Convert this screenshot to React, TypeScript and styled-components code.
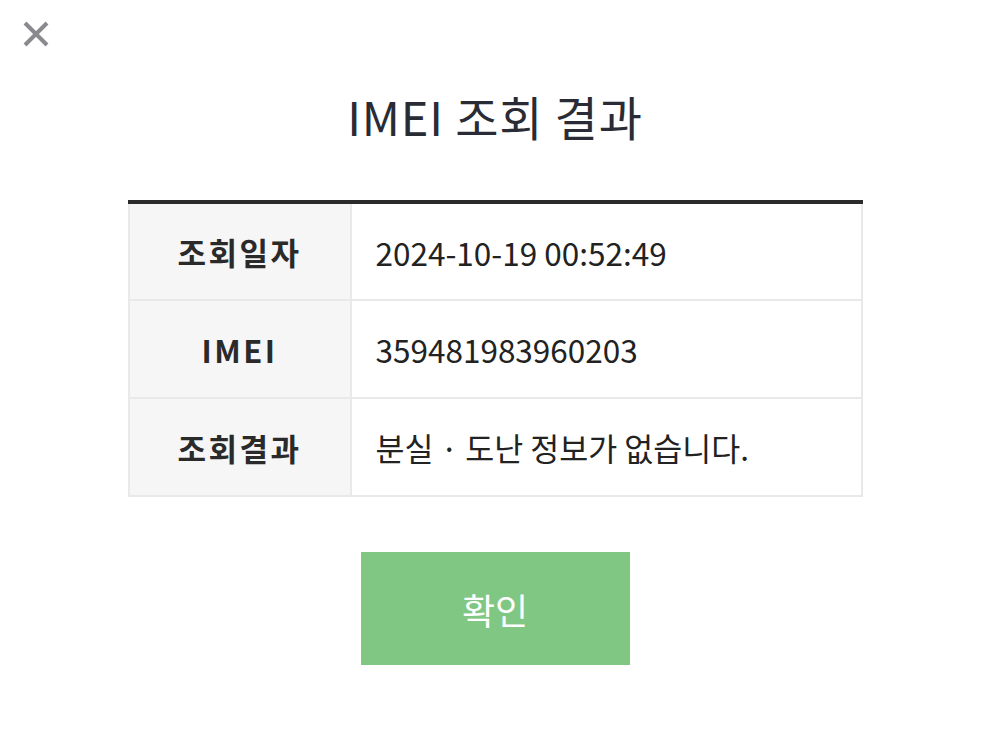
import styled, { createGlobalStyle } from "styled-components";

const GlobalStyle = createGlobalStyle`
    html, body {
        margin: 0;
        padding: 0;
        background: #ffffff;
        font-family: "Noto Sans CJK KR", "Noto Sans", sans-serif;
    }
`;

const Page = styled.div`
    position: relative;
    width: 990px;
    height: 750px;
    display: flex;
    flex-direction: column;
    align-items: center;
    box-sizing: border-box;
    padding-top: 81px;
`;

const CloseButton = styled.button`
    position: absolute;
    left: 19px;
    top: 17px;
    width: 34px;
    height: 34px;
    padding: 0;
    border: none;
    background: none;
    display: flex;
    align-items: center;
    justify-content: center;
    cursor: pointer;
`;

const Title = styled.h1`
    margin: 0;
    font-size: 47px;
    font-weight: 400;
    color: #2a2c35;
    line-height: 70px;
    letter-spacing: 0.8px;
`;

const Table = styled.table`
    margin-top: 49px;
    width: 735px;
    border-collapse: collapse;
    border-top: 4px solid #2b2b2b;
    table-layout: fixed;
`;

const Row = styled.tr`
    height: 98px;
`;

const HeadCell = styled.th`
    width: 220px;
    background: #f6f6f6;
    border: 2px solid #e9e9e9;
    border-top: none;
    font-size: 31px;
    font-weight: 700;
    color: #2a2a2a;
    letter-spacing: 2.5px;
    text-align: center;
    padding: 0;
`;

const ValueCell = styled.td`
    border: 2px solid #e9e9e9;
    border-top: none;
    font-size: 31.5px;
    font-weight: 400;
    color: #222222;
    padding: 0 0 0 24px;
`;

const ConfirmButton = styled.button`
    margin-top: 55px;
    width: 269px;
    height: 113px;
    border: none;
    background: #81c784;
    color: #ffffff;
    font-family: "Noto Sans CJK KR", "Noto Sans", sans-serif;
    font-size: 36px;
    font-weight: 400;
    cursor: pointer;
`;

const rows = [
    { label: "조회일자", value: "2024-10-19 00:52:49" },
    { label: "IMEI", value: "359481983960203" },
    { label: "조회결과", value: "분실 · 도난 정보가 없습니다." },
];

const App = () => {
    return (
        <>
            <GlobalStyle />
            <Page>
                <CloseButton aria-label="close">
                    <svg width="28" height="28" viewBox="0 0 28 28">
                        <path d="M3 3 L25 25 M25 3 L3 25" stroke="#8a8a8e" strokeWidth="4" strokeLinecap="butt" />
                    </svg>
                </CloseButton>
                <Title>IMEI 조회 결과</Title>
                <Table>
                    <tbody>
                        {rows.map((r) => (
                            <Row key={r.label}>
                                <HeadCell>{r.label}</HeadCell>
                                <ValueCell>{r.value}</ValueCell>
                            </Row>
                        ))}
                    </tbody>
                </Table>
                <ConfirmButton>확인</ConfirmButton>
            </Page>
        </>
    );
};

export default App;
